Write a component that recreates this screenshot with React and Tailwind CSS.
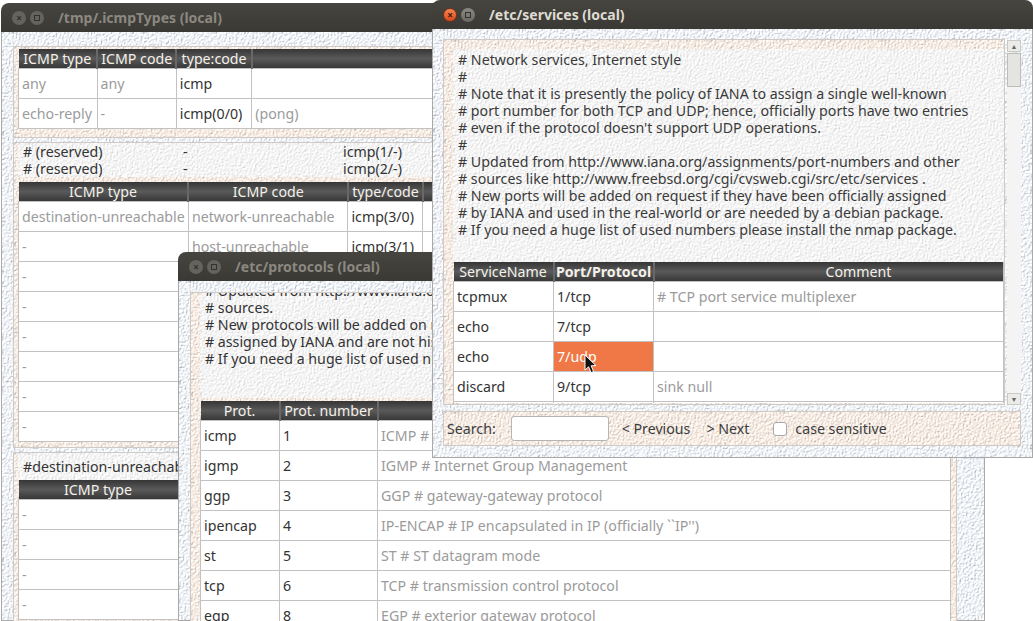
import React from 'react';

const font = "font-['Noto_Sans','Open_Sans',sans-serif]";

// embossed wallpaper used by the Qt theme
function Filters() {
  const tint = (id, color, scale) => (
    <filter id={id} x="0" y="0" width="100%" height="100%" colorInterpolationFilters="sRGB">
      <feTurbulence type="fractalNoise" baseFrequency="0.6" numOctaves="3" seed="4" result="n" />
      <feDiffuseLighting in="n" surfaceScale={scale} diffuseConstant="1.13" lightingColor={color}>
        <feDistantLight azimuth="45" elevation="62" />
      </feDiffuseLighting>
    </filter>
  );
  return (
    <svg className="absolute w-0 h-0">
      <defs>
        {tint('paper-blue', '#f1f5fa', 1)}
        {tint('paper-beige', '#f8ede5', 0.85)}
        {tint('paper-grey', '#f5f5f5', 0.5)}
      </defs>
    </svg>
  );
}

function Paper({ tone }) {
  return (
    <svg className="absolute inset-0 w-full h-full">
      <rect width="100%" height="100%" filter={`url(#paper-${tone})`} />
    </svg>
  );
}

function Panel({ tone = 'beige', className = '', children }) {
  return (
    <div className={`relative overflow-hidden ${className}`}>
      <Paper tone={tone} />
      <div className="relative">{children}</div>
    </div>
  );
}

function Win({ pos, title, focused, children }) {
  return (
    <div className={`absolute ${pos} flex flex-col rounded-t-lg overflow-hidden ${font}`}>
      <div className="h-[29px] shrink-0 flex items-center bg-gradient-to-b from-[#46453f] to-[#3a3935]">
        {focused ? (
          <>
            <span className="ml-[11px] w-[14px] h-[14px] rounded-full bg-gradient-to-b from-[#f4864e] to-[#d9461c] border border-[#7a3018] flex items-center justify-center text-[#3a1a0c] text-[10px] font-bold leading-none">×</span>
            <span className="ml-[4px] w-[14px] h-[14px] rounded-full bg-gradient-to-b from-[#8a8983] to-[#6a6963] flex items-center justify-center">
              <span className="w-[6px] h-[6px] border border-[#33322e]" />
            </span>
          </>
        ) : (
          <>
            <span className="ml-[11px] w-[14px] h-[14px] rounded-full bg-[#64635d] flex items-center justify-center text-[#33322e] text-[10px] font-bold leading-none">×</span>
            <span className="ml-[4px] w-[14px] h-[14px] rounded-full bg-[#64635d] flex items-center justify-center">
              <span className="w-[6px] h-[6px] border border-[#33322e]" />
            </span>
          </>
        )}
        <span className={`ml-[14px] text-[14px] font-bold whitespace-nowrap ${focused ? 'text-[#dfdbd2]' : 'text-[#8b8880]'}`}>{title}</span>
      </div>
      <div className="relative flex-1 min-h-0 border-x border-b border-[#a9a9a9]">
        <Paper tone="blue" />
        <div className="relative h-full">{children}</div>
      </div>
    </div>
  );
}

// widths = tailwind w-[..] classes, head = titles, rows = [[text, grey?], ...]
function Grid({ widths, head, rows, boldCol = -1, hot = null, className = '' }) {
  return (
    <table className={`table-fixed border-collapse text-[14.2px] ${className}`}>
      <colgroup>
        {widths.map((w, i) => <col key={i} className={w} />)}
      </colgroup>
      <thead>
        <tr className="h-[19px]">
          {head.map((h, i) => (
            <th
              key={i}
              className={`p-0 border-r-2 border-[#686868] last:border-r-0 bg-gradient-to-b from-[#363636] via-[#5a5a5a] to-[#383838] text-[#f4f1ea] text-center whitespace-nowrap overflow-hidden leading-[19px] ${i === boldCol ? 'font-bold' : 'font-normal'}`}
            >
              {h}
            </th>
          ))}
        </tr>
      </thead>
      <tbody>
        {rows.map((r, ri) => (
          <tr key={ri} className="h-[30px]">
            {r.map((c, ci) => {
              const isHot = hot && hot[0] === ri && hot[1] === ci;
              const grey = Array.isArray(c);
              return (
                <td
                  key={ci}
                  className={`px-[3px] py-0 border border-[#c2c2c2] whitespace-nowrap overflow-hidden ${isHot ? 'bg-[#f07746] text-white' : 'bg-white'} ${!isHot && grey ? 'text-[#9b9b9b]' : ''} ${!isHot && !grey ? 'text-[#333333]' : ''}`}
                >
                  {grey ? c[0] : c}
                </td>
              );
            })}
          </tr>
        ))}
      </tbody>
    </table>
  );
}

const g = t => [t];

function IcmpWindow() {
  const codes = ['network-unreachable', 'host-unreachable', 'protocol-unreachable', 'port-unreachable', 'fragmentation-needed', 'source-route-failed', 'network-unknown', 'host-unknown'];
  return (
    <Win pos="left-[1px] top-[3px] w-[500px] h-[618px]" title="/tmp/.icmpTypes (local)">
      <div className="pl-[11px] pt-[14px]">
        <Panel className="h-[92px] border border-[#cfcac5] pl-[4px] pt-[2px]">
          <Grid
            widths={['w-[79px]', 'w-[81px]', 'w-[77px]', 'w-[300px]']}
            head={['ICMP type', 'ICMP code', 'type:code', '']}
            rows={[
              [g('any'), g('any'), 'icmp', ''],
              [g('echo-reply'), g('-'), 'icmp(0/0)', g('(pong)')],
            ]}
          />
        </Panel>
        <Panel className="mt-[4px] h-[306px] border border-[#cfcac5] pl-[4px]">
          <Panel tone="grey" className="h-[34px] pl-[5px] text-[14.2px] leading-[17px] text-[#333333]">
            {[0, 1].map(i => (
              <div key={i} className="flex">
                <span className="w-[160px]"># (reserved)</span>
                <span className="w-[160px]">-</span>
                <span>icmp({i + 1}/-)</span>
              </div>
            ))}
          </Panel>
          <Grid
            className="mt-[5px]"
            widths={['w-[170px]', 'w-[160px]', 'w-[77px]', 'w-[100px]']}
            head={['ICMP type', 'ICMP code', 'type/code', '']}
            rows={codes.map((c, i) => [g(i === 0 ? 'destination-unreachable' : '-'), g(c), `icmp(3/${i})`, ''])}
          />
        </Panel>
        <Panel className="mt-[4px] h-[170px] border border-[#cfcac5] pl-[4px]">
          <Panel tone="grey" className="h-[27px] pl-[5px] text-[14.2px] leading-[27px] text-[#333333] whitespace-nowrap">
            #destination-unreachable
          </Panel>
          <Grid
            widths={['w-[160px]', 'w-[160px]']}
            head={['ICMP type', 'ICMP code']}
            rows={[0, 1, 2, 3].map(() => [g('-'), g('-')])}
          />
        </Panel>
      </div>
    </Win>
  );
}

function ProtocolsWindow() {
  const rows = [
    ['icmp', '1', 'ICMP # internet control message protocol'],
    ['igmp', '2', 'IGMP # Internet Group Management'],
    ['ggp', '3', 'GGP # gateway-gateway protocol'],
    ['ipencap', '4', "IP-ENCAP # IP encapsulated in IP (officially ``IP'')"],
    ['st', '5', 'ST # ST datagram mode'],
    ['tcp', '6', 'TCP # transmission control protocol'],
    ['egp', '8', 'EGP # exterior gateway protocol'],
  ];
  return (
    <Win pos="left-[178px] top-[252px] w-[807px] h-[369px]" title="/etc/protocols (local)">
      <div className="pl-[11px] pr-[27px] pt-[11px]">
        <Panel className="h-[340px] border border-[#cfcac5] pl-[9px] pr-[5px]">
          <Panel tone="grey" className="h-[105px] pl-[5px] text-[14.2px] leading-[17px] text-[#333333] whitespace-nowrap">
            <div className="-mt-[11px]">
              <div># Updated from http://www.iana.org/assignments/protocol-numbers and other</div>
              <div># sources.</div>
              <div># New protocols will be added on request if they have been officially assigned</div>
              <div># assigned by IANA and are not historical.</div>
              <div># If you need a huge list of used numbers please install the nmap package.</div>
            </div>
          </Panel>
          <Grid
            className="mt-[3px]"
            widths={['w-[79px]', 'w-[98px]', 'w-[573px]']}
            head={['Prot.', 'Prot. number', '']}
            rows={rows.map(r => [r[0], r[1], g(r[2])])}
          />
        </Panel>
      </div>
    </Win>
  );
}

function ServicesWindow() {
  const lines = [
    '# Network services, Internet style',
    '#',
    '# Note that it is presently the policy of IANA to assign a single well-known',
    '# port number for both TCP and UDP; hence, officially ports have two entries',
    "# even if the protocol doesn't support UDP operations.",
    '#',
    '# Updated from http://www.iana.org/assignments/port-numbers and other',
    '# sources like http://www.freebsd.org/cgi/cvsweb.cgi/src/etc/services .',
    '# New ports will be added on request if they have been officially assigned',
    '# by IANA and used in the real-world or are needed by a debian package.',
    '# If you need a huge list of used numbers please install the nmap package.',
  ];
  return (
    <Win pos="left-[432px] top-0 w-[601px] h-[458px]" title="/etc/services (local)" focused>
      <div className="pl-[10px] pr-[11px] pt-[10px]">
        <div className="flex h-[366px]">
          <Panel className="w-[563px] border border-[#cfcac5] pl-[9px] pt-[9px]">
            <Panel tone="grey" className="h-[213px] w-[552px] pl-[5px] pt-[2px] text-[14.2px] leading-[17px] text-[#3a3a3a] whitespace-nowrap">
              {lines.map((l, i) => <div key={i}>{l}</div>)}
            </Panel>
            <div className="h-[141px] w-[551px] overflow-hidden border-r border-[#c2c2c2]">
              <Grid
                className="w-[609px] max-w-none"
                widths={['w-[100px]', 'w-[100px]', 'w-[409px]']}
                head={['ServiceName', 'Port/Protocol', 'Comment']}
                boldCol={1}
                hot={[2, 1]}
                rows={[
                  ['tcpmux', '1/tcp', g('# TCP port service multiplexer')],
                  ['echo', '7/tcp', ''],
                  ['echo', '7/udp', ''],
                  ['discard', '9/tcp', g('sink null')],
                  ['discard', '9/udp', g('sink null')],
                ]}
              />
            </div>
          </Panel>
          <div className="w-[16px] flex flex-col items-center pl-[2px]">
            <div className="w-[14px] h-[12px] mt-[1px] bg-[#ebebe8] border border-[#c9c9c6] flex items-center justify-center text-[#666666] text-[7px] leading-none">▲</div>
            <div className="w-[14px] h-[34px] mt-[1px] bg-[#e4e4e0] border border-[#bdbdba]" />
            <div className="w-[14px] flex-1 bg-[#f4f4f4]" />
            <div className="w-[14px] h-[12px] bg-[#ebebe8] border border-[#c9c9c6] flex items-center justify-center text-[#666666] text-[7px] leading-none">▼</div>
          </div>
        </div>
        <Panel className="mt-[6px] h-[35px] border border-[#cfcac5]">
          <div className="h-[33px] flex items-center text-[14.2px] text-[#3c3c3c] whitespace-nowrap">
            <span className="ml-[3px]">Search:</span>
            <input className="ml-[15px] w-[98px] h-[25px] bg-white border border-[#b5b5b5] rounded-[3px]" readOnly />
            <span className="ml-[13px]">&lt; Previous</span>
            <span className="ml-[16px]">&gt; Next</span>
            <span className="ml-[24px] w-[14px] h-[14px] bg-white border border-[#a8a8a8] rounded-[3px]" />
            <span className="ml-[8px]">case sensitive</span>
          </div>
        </Panel>
      </div>
    </Win>
  );
}

function Cursor() {
  return (
    <svg className="absolute left-[584px] top-[354px]" width="14" height="21" viewBox="0 0 14 21">
      <path d="M1 1 L1 16 L4.6 12.8 L7 18.6 L9.6 17.5 L7.2 11.8 L12 11.6 Z" fill="#111111" stroke="#ffffff" strokeWidth="1" />
    </svg>
  );
}

export default function App() {
  return (
    <div className="relative w-[1033px] h-[621px] overflow-hidden bg-white">
      <Filters />
      <IcmpWindow />
      <ProtocolsWindow />
      <ServicesWindow />
      <Cursor />
    </div>
  );
}
